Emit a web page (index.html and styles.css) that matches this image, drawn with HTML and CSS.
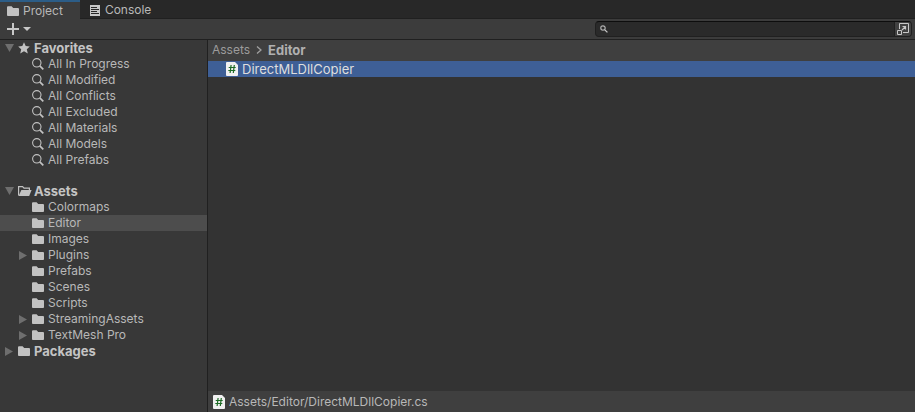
FILE: index.html
```
<!DOCTYPE html>
<html lang="en">
<head>
<meta charset="utf-8">
<title>Project</title>
<link rel="stylesheet" href="styles.css">
</head>
<body>
<svg class="sprite" aria-hidden="true">
  <symbol id="folder" viewBox="0 0 12 12"><path d="M0 2.2Q0 1.2 1 1.2H4.6L6.2 3H11Q12 3 12 4V10.2Q12 11 11 11H1Q0 11 0 10.2Z" fill="#c2c2c2"/></symbol>
  <symbol id="folder-open" viewBox="0 0 14 12"><path d="M.6 10.5V1.6H4.6L6 3.2H11.4V5" fill="none" stroke="#c2c2c2" stroke-width="1.2"/><path d="M3.4 5H13.6L11.2 11H.6Z" fill="#c2c2c2"/></symbol>
  <symbol id="search" viewBox="0 0 12 12"><circle cx="4.8" cy="4.8" r="4.2" fill="none" stroke="#c2c2c2" stroke-width="1.1"/><path d="M7.8 7.8L11.3 11.3" stroke="#c2c2c2" stroke-width="1.7"/></symbol>
  <symbol id="star" viewBox="0 0 12 12"><path d="M6 .3L7.7 4 11.8 4.4 8.8 7.2 9.8 11.4 6 9.2 2.2 11.4 3.2 7.2.2 4.4 4.3 4Z" fill="#c2c2c2"/></symbol>
  <symbol id="down" viewBox="0 0 9 8"><path d="M0 0H9L4.5 8Z" fill="#6e6e6e"/></symbol>
  <symbol id="right" viewBox="0 0 8 9"><path d="M0 0L8 4.5 0 9Z" fill="#6e6e6e"/></symbol>
  <symbol id="script" viewBox="0 0 12 14"><path d="M1 0H9L12 3V13Q12 14 11 14H1Q0 14 0 13V1Q0 0 1 0Z" fill="#f0f0f0"/><path d="M5.1 3L4.1 11M8.3 3L7.3 11M2.7 5.5H9.7M2.3 8.5H9.3" stroke="#1d6b25" stroke-width="1.2" fill="none"/></symbol>
</svg>
<div class="window">
  <header class="tabs" role="tablist">
    <button class="tab active" role="tab" aria-selected="true"><svg class="icon"><use href="#folder"/></svg>Project</button>
    <button class="tab" role="tab" aria-selected="false"><svg class="log" viewBox="0 0 10 11"><path d="M0 0H10V11H0Z" fill="#c8c8c8"/><path d="M1 2.5H7M1 4.5H9M1 6.5H7M1 8.5H9" stroke="#282828"/></svg>Console</button>
  </header>
  <div class="toolbar">
    <button class="add" aria-label="Create"><svg class="plus" viewBox="0 0 12 12"><path d="M6 0V12M0 6H12" stroke="#c8c8c8" stroke-width="2"/></svg><svg class="caret" viewBox="0 0 8 4"><path d="M0 0H8L4 4Z" fill="#c8c8c8"/></svg></button>
    <div class="finder">
      <label class="search"><svg class="lens" viewBox="0 0 8 8"><circle cx="3" cy="3" r="2.2" fill="none" stroke="#b0b0b0" stroke-width="1.2"/><path d="M4.6 4.6L7.4 7.4" stroke="#c8c8c8" stroke-width="1.3"/></svg><input type="text" aria-label="Search"></label>
      <button class="popout" aria-label="Open in search window"><svg class="expand" viewBox="0 0 12 12"><path d="M2.5 6V.5H11.5V9.5H6" fill="none" stroke="#c8c8c8"/><path d="M.5 7.5H4.5V11.5H.5Z" fill="none" stroke="#c8c8c8"/><path d="M5 7L8.5 3.5M5.5 3.5H8.5V6.5" fill="none" stroke="#c8c8c8" stroke-width="1.2"/></svg></button>
    </div>
  </div>
  <div class="body">
    <nav class="tree" aria-label="Folders">
      <ul class="group">
        <li><button class="row root"><span class="toggle"><svg class="down"><use href="#down"/></svg></span><svg class="icon"><use href="#star"/></svg>Favorites</button></li>
        <li><button class="row"><span class="toggle"></span><svg class="icon"><use href="#search"/></svg>All In Progress</button></li>
        <li><button class="row"><span class="toggle"></span><svg class="icon"><use href="#search"/></svg>All Modified</button></li>
        <li><button class="row"><span class="toggle"></span><svg class="icon"><use href="#search"/></svg>All Conflicts</button></li>
        <li><button class="row"><span class="toggle"></span><svg class="icon"><use href="#search"/></svg>All Excluded</button></li>
        <li><button class="row"><span class="toggle"></span><svg class="icon"><use href="#search"/></svg>All Materials</button></li>
        <li><button class="row"><span class="toggle"></span><svg class="icon"><use href="#search"/></svg>All Models</button></li>
        <li><button class="row"><span class="toggle"></span><svg class="icon"><use href="#search"/></svg>All Prefabs</button></li>
      </ul>
      <ul class="group">
        <li><button class="row root"><span class="toggle"><svg class="down"><use href="#down"/></svg></span><svg class="icon open"><use href="#folder-open"/></svg>Assets</button></li>
        <li><button class="row"><span class="toggle"></span><svg class="icon"><use href="#folder"/></svg>Colormaps</button></li>
        <li><button class="row selected"><span class="toggle"></span><svg class="icon"><use href="#folder"/></svg>Editor</button></li>
        <li><button class="row"><span class="toggle"></span><svg class="icon"><use href="#folder"/></svg>Images</button></li>
        <li><button class="row"><span class="toggle"><svg class="right"><use href="#right"/></svg></span><svg class="icon"><use href="#folder"/></svg>Plugins</button></li>
        <li><button class="row"><span class="toggle"></span><svg class="icon"><use href="#folder"/></svg>Prefabs</button></li>
        <li><button class="row"><span class="toggle"></span><svg class="icon"><use href="#folder"/></svg>Scenes</button></li>
        <li><button class="row"><span class="toggle"></span><svg class="icon"><use href="#folder"/></svg>Scripts</button></li>
        <li><button class="row"><span class="toggle"><svg class="right"><use href="#right"/></svg></span><svg class="icon"><use href="#folder"/></svg>StreamingAssets</button></li>
        <li><button class="row"><span class="toggle"><svg class="right"><use href="#right"/></svg></span><svg class="icon"><use href="#folder"/></svg>TextMesh Pro</button></li>
        <li><button class="row root"><span class="toggle"><svg class="right"><use href="#right"/></svg></span><svg class="icon"><use href="#folder"/></svg>Packages</button></li>
      </ul>
    </nav>
    <main class="content">
      <div class="crumbs"><a href="#assets">Assets</a><svg class="chevron" viewBox="0 0 6 8"><path d="M1 .5L5 4 1 7.5" fill="none" stroke="#a0a0a0" stroke-width="1.3"/></svg><a class="current" href="#editor">Editor</a></div>
      <div class="files"><button class="file"><svg class="script"><use href="#script"/></svg>DirectMLDllCopier</button></div>
      <footer class="status"><svg class="script"><use href="#script"/></svg>Assets/Editor/DirectMLDllCopier.cs</footer>
    </main>
  </div>
</div>
</body>
</html>
```
FILE: styles.css
```
* { box-sizing: border-box; }
body {
  margin: 0;
  background: #383838;
  color: #b8b8b8;
  font: 12px/16px Inter, "Liberation Sans", sans-serif;
}
button, input { font: inherit; color: inherit; background: none; border: 0; padding: 0; margin: 0; outline: 0; }
a { color: inherit; text-decoration: none; }
ul { list-style: none; margin: 0; padding: 0; }
svg { display: block; flex: none; }
.sprite { position: absolute; width: 0; height: 0; }
.window { display: flex; flex-direction: column; min-height: 100vh; }

.tabs { display: flex; height: 19px; background: #282828; }
.tab { display: flex; align-items: center; gap: 4px; padding: 2px 17px 0 7px; border-bottom: 1px solid #202020; }
.tabs::after { content: ""; flex: 1; border-bottom: 1px solid #202020; }
.tab + .tab { gap: 5px; padding-left: 10px; }
.tab.active { background: #3c3c3c; border-top: 2px solid #2c5d87; border-bottom: 0; padding-top: 0; }
.icon { width: 12px; height: 12px; }
.log { width: 10px; height: 11px; }

.toolbar { display: flex; align-items: center; justify-content: space-between; height: 21px; padding: 0 3px 0 7px; background: #3c3c3c; border-bottom: 1px solid #202020; }
.add { display: flex; align-items: center; gap: 4px; }
.plus { width: 12px; height: 12px; }
.caret { width: 8px; height: 4px; }
.finder { display: flex; width: 35%; height: 16px; border: 1px solid #202020; border-top-color: #0d0d0d; border-radius: 4px; background: #2a2a2a; overflow: hidden; }
.search { display: flex; flex: 1; align-items: center; gap: 4px; padding-left: 4px; }
.lens { width: 8px; height: 8px; }
.search input { flex: 1; min-width: 0; height: 14px; }
.popout { display: flex; align-items: center; justify-content: center; width: 17px; background: #414141; border-left: 1px solid #202020; }
.expand { width: 12px; height: 12px; }

.body { display: flex; flex: 1; }
.tree { width: 208px; flex: none; border-right: 1px solid #202020; }
.group + .group { margin-top: 15px; }
.row { display: flex; align-items: center; gap: 4px; width: 100%; height: 16px; padding-left: 18px; text-align: left; white-space: nowrap; }
.row.root { padding-left: 4px; font-size: 13px; font-weight: 700; color: #c4c4c4; }
.row.selected { background: #4d4d4d; }
.toggle { display: flex; align-items: center; justify-content: center; width: 10px; }
.down { width: 9px; height: 8px; }
.right { width: 8px; height: 9px; }
.icon.open { width: 14px; margin-right: -2px; }

.content { display: flex; flex: 1; flex-direction: column; min-width: 0; background: #333333; }
.crumbs { display: flex; align-items: center; gap: 6px; height: 21px; padding: 0 4px 2px; background: #3f3f3f; color: #9c9c9c; }
.chevron { width: 6px; height: 8px; }
.current { font-size: 13px; font-weight: 700; color: #b0b0b0; }
.files { flex: 1; }
.file { display: flex; align-items: center; gap: 4px; width: 100%; height: 16px; padding-left: 18px; background: #3e5f96; color: #dedede; font-size: 13px; text-align: left; }
.script { width: 12px; height: 14px; }
.status { display: flex; align-items: center; gap: 4px; height: 21px; padding-left: 5px; background: #3f3f3f; }
```
